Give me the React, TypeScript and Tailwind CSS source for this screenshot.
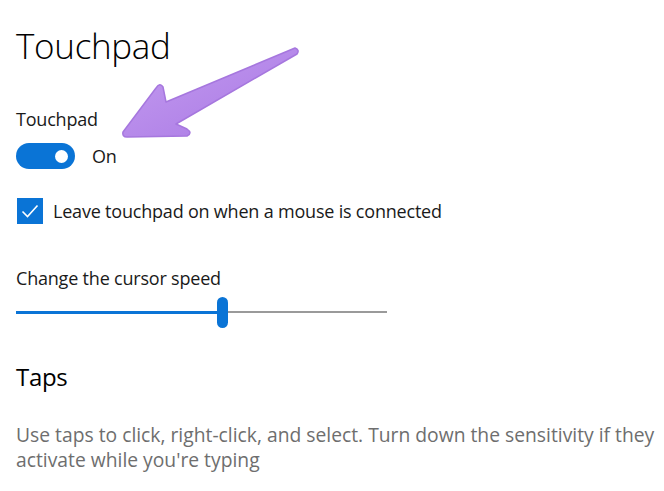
import React from "react";

function Arrow() {
  return (
    <svg
      className="absolute left-0 top-0 pointer-events-none"
      width="664"
      height="491"
      viewBox="0 0 664 491"
    >
      <defs>
        <linearGradient id="ag" x1="0" y1="0" x2="1" y2="1">
          <stop offset="0" stopColor="#c49cf0" />
          <stop offset="1" stopColor="#a978e4" />
        </linearGradient>
      </defs>
      <path
        d="M295 48 Q300 50 297 54 L176 124 L187 129 Q193 133 187 136 L127 137 Q122 137 123 132 L156 88 Q160 82 163 87 L166 102 Z"
        fill="url(#ag)"
        stroke="#a677de"
        strokeWidth="1.5"
        strokeLinejoin="round"
      />
    </svg>
  );
}

export default function App() {
  const font = { fontFamily: '"Segoe UI", "Open Sans", sans-serif' };
  return (
    <div
      className="relative w-[664px] h-[491px] bg-white overflow-hidden pl-4"
      style={font}
    >
      <div className="pt-[24px]">
        <h1 className="text-[35px] leading-[44px] font-light tracking-[-0.3px] text-black">Touchpad</h1>
      </div>
      <div className="mt-[39px] text-[18px] leading-[24px] tracking-[-0.2px] text-[#1a1a1a]">Touchpad</div>
      <div className="mt-[12px] flex items-center gap-[17px]">
        <div className="w-[59px] h-[26px] rounded-full bg-[#0a74d6] flex items-center justify-end pr-[7px]">
          <div className="w-[13px] h-[13px] rounded-full bg-white" />
        </div>
        <span className="text-[18px] leading-[24px] tracking-[-0.2px] text-[#1a1a1a]">On</span>
      </div>
      <div className="mt-[29px] flex items-center gap-[10px]">
        <div className="ml-px w-[26px] h-[26px] bg-[#0a74d6] flex items-center justify-center">
          <svg width="20" height="20" viewBox="0 0 20 20">
            <path d="M2.5 10.5 L7.5 15.5 L17.5 4.5" fill="none" stroke="white" strokeWidth="1.6" />
          </svg>
        </div>
        <span className="text-[18px] leading-[24px] tracking-[-0.2px] text-[#1a1a1a]">
          Leave touchpad on when a mouse is connected
        </span>
      </div>
      <div className="mt-[42px] text-[18px] leading-[24px] tracking-[-0.2px] text-[#1a1a1a]">Change the cursor speed</div>
      <div className="mt-[6px] w-[371px] h-[32px] flex items-center">
        <div className="w-[201px] h-[3px] bg-[#0a74d6]" />
        <div className="w-[11px] h-[31px] rounded-full bg-[#0a74d6]" />
        <div className="flex-1 h-[2px] bg-[#9a9a9a]" />
      </div>
      <div className="mt-[32px] text-[24px] leading-[34px] tracking-[-0.3px] text-black">Taps</div>
      <div className="mt-[28px] text-[19.3px] leading-[25px] text-[#6e6e6e]">
        <div className="whitespace-nowrap">
          Use taps to click, right-click, and select. Turn down the sensitivity if they
        </div>
        <div>activate while you're typing</div>
      </div>
      <Arrow />
    </div>
  );
}
